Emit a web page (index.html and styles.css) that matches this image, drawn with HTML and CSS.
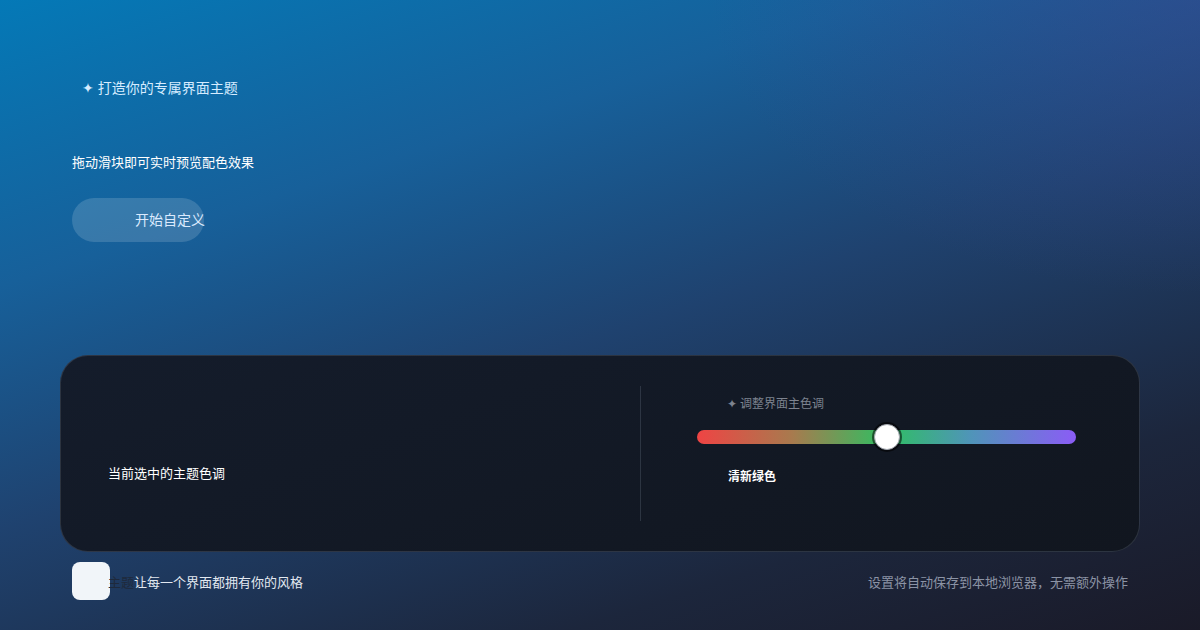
FILE: index.html
```html
<!DOCTYPE html>
<html lang="zh-CN">
<head>
    <meta charset="UTF-8">
    <meta name="viewport" content="width=device-width, initial-scale=1.0">
    <title>主题配色</title>
    <link rel="stylesheet" href="styles.css">
</head>
<body>
    <main class="page">
        <!-- Intro -->
        <section class="hero">
            <p class="eyebrow">✦ 打造你的专属界面主题</p>
            <p class="lead">拖动滑块即可实时预览配色效果</p>
            <button class="pill" type="button">开始自定义</button>
        </section>

        <!-- Colour panel -->
        <section class="panel">
            <div class="panel-left">
                <p class="panel-note">当前选中的主题色调</p>
            </div>
            <div class="panel-divider"></div>
            <div class="panel-right">
                <p class="slider-label">✦ 调整界面主色调</p>
                <div class="slider">
                    <div class="slider-track"></div>
                    <span class="slider-thumb" style="left: 50%;"></span>
                </div>
                <p class="slider-value">清新绿色</p>
            </div>
        </section>

        <!-- Footer -->
        <footer class="footer">
            <div class="brand">
                <span class="brand-mark"></span>
                <span class="brand-name">主题</span>
                <span class="brand-tag">让每一个界面都拥有你的风格</span>
            </div>
            <p class="footer-note">设置将自动保存到本地浏览器，无需额外操作</p>
        </footer>
    </main>
</body>
</html>
```

FILE: styles.css
```css
* {
    box-sizing: border-box;
}
body {
    margin: 0;
    font-family: "Noto Sans", "Noto Sans CJK SC", sans-serif;
    font-size: 13px;
    color: #fff;
    background: #1a1a28;
}
p {
    margin: 0;
}
.page {
    width: 1200px;
    height: 630px;
    overflow: hidden;
    background:
        radial-gradient(ellipse 700px 420px at 100% 0%, rgba(62, 72, 150, 0.45), transparent 70%),
        linear-gradient(162deg, #0479b7 0%, #17609a 28%, #1f426f 52%, #1c263c 80%, #1a1a28 100%);
}

/* intro */
.hero {
    padding: 78px 72px 0;
}
.eyebrow {
    margin-left: 10px;
    font-size: 14px;
    line-height: 20px;
    color: #d6ecff;
}
.lead {
    margin-top: 54px;
    line-height: 20px;
}
.pill {
    display: block;
    margin-top: 26px;
    width: 132px;
    height: 44px;
    padding: 0 0 3px 63px;
    border: none;
    border-radius: 22px;
    background: rgba(255, 255, 255, 0.15);
    color: #dbeafe;
    font: inherit;
    font-size: 14px;
    text-align: left;
    white-space: nowrap;
}

/* panel */
.panel {
    display: grid;
    grid-template-columns: 579px 1px 1fr;
    margin: 113px 60px 0;
    height: 197px;
    padding: 30px 0;
    border: 1px solid rgba(148, 163, 184, 0.2);
    border-radius: 28px;
    background: linear-gradient(160deg, #141c2b, #11161f);
}
.panel-left {
    padding: 77px 0 0 47px;
}
.panel-note {
    line-height: 20px;
}
.panel-divider {
    background: rgba(148, 163, 184, 0.2);
}
.panel-right {
    padding: 0 63px 0 56px;
}
.slider-label {
    margin: 8px 0 0 30px;
    font-size: 12px;
    line-height: 20px;
    color: #7d838f;
}
.slider {
    position: relative;
    height: 26px;
    margin-top: 10px;
}
.slider-track {
    position: absolute;
    top: 6px;
    left: 0;
    right: 0;
    height: 14px;
    border-radius: 7px;
    background: linear-gradient(90deg, #ef4444, #a87a4e 25%, #2fbf62 50%, #4f95b8 72%, #8b5cf6);
}
.slider-thumb {
    position: absolute;
    top: 0;
    width: 26px;
    height: 26px;
    margin-left: -13px;
    border-radius: 50%;
    background: #fff;
    border: 1px solid #a3a8b0;
    box-shadow: 0 0 0 2px rgba(0, 0, 0, 0.55);
}
.slider-value {
    margin: 17px 0 0 31px;
    font-size: 12px;
    line-height: 20px;
    font-weight: bold;
}

/* footer */
.footer {
    display: flex;
    align-items: center;
    justify-content: space-between;
    margin-top: 10px;
    padding: 0 72px;
    height: 38px;
}
.brand {
    display: flex;
    align-items: center;
}
.brand-mark {
    width: 38px;
    height: 38px;
    border-radius: 8px;
    background: #f1f5f9;
}
.brand-name {
    margin-left: -2px;
    color: #1e293b;
}
.brand-tag {
    color: #e2e8f0;
}
.footer-note {
    color: #8b93a5;
}
```
